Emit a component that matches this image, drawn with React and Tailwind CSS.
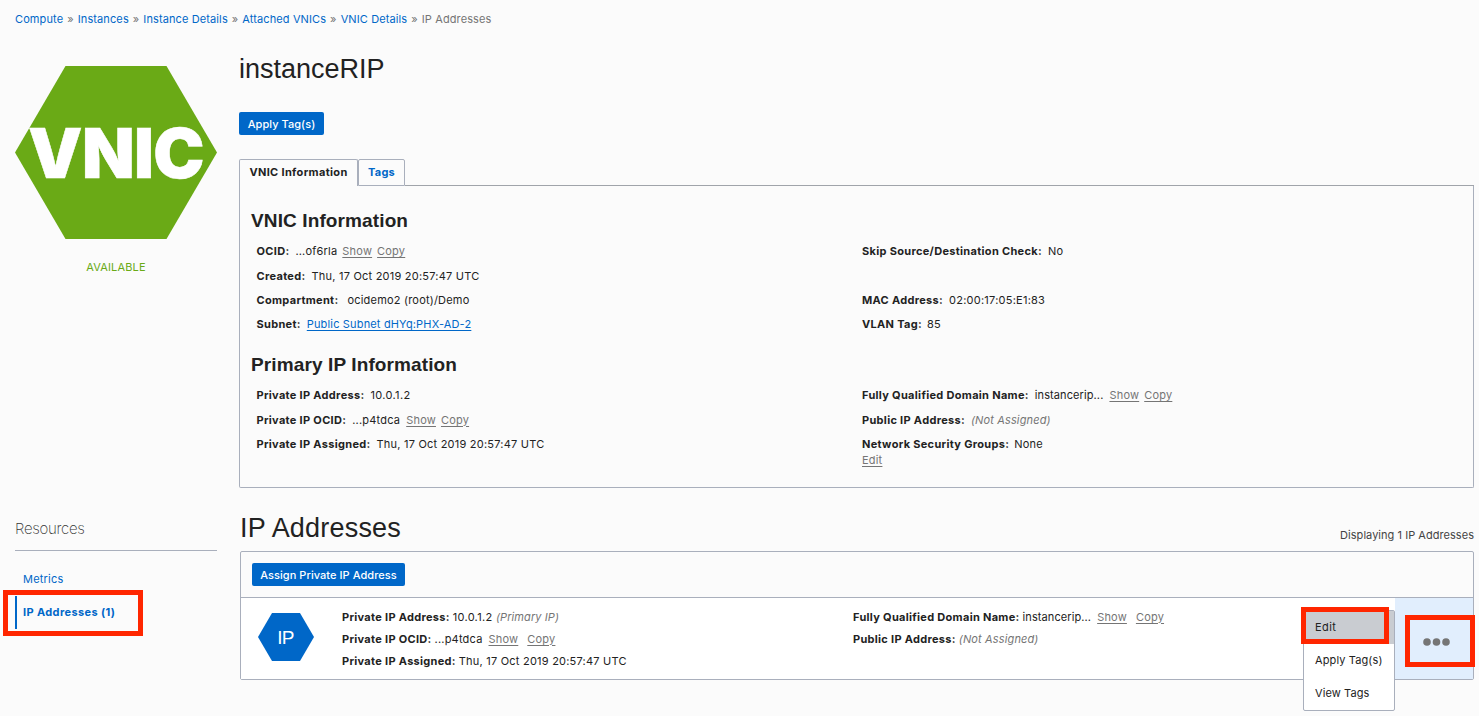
import React from "react";

const crumbs = ["Compute", "Instances", "Instance Details", "Attached VNICs", "VNIC Details"];

function Action({ children, className = "" }) {
  return (
    <a className={`text-[#757575] underline underline-offset-[2px] ${className}`} href="#">
      {children}
    </a>
  );
}

function Field({ label, children, className = "h-[24px]" }) {
  return (
    <div className={`flex items-center whitespace-nowrap ${className}`}>
      <span className="mr-[6px] font-bold tracking-[0.31px]">{label}</span>
      {children}
    </div>
  );
}

function Line({ label, children }) {
  return (
    <div className="flex h-[22px] items-center whitespace-nowrap">
      <span className="mr-[3px] font-bold tracking-[0.3px]">{label}</span>
      {children}
    </div>
  );
}

function Heading({ children }) {
  return (
    <h2 className="pt-px font-['Liberation_Sans',sans-serif] text-[19px] leading-[24px] font-bold tracking-[0.12px]">{children}</h2>
  );
}

function Sidebar() {
  return (
    <aside className="w-[202px] shrink-0">
      <svg className="mt-[28px] block" width="202" height="173" viewBox="0 0 202 173">
        <polygon points="0,86.5 50.5,0 151.5,0 202,86.5 151.5,173 50.5,173" fill="#6aaa16" />
        <text x="13" y="111.7" textLength="176" lengthAdjust="spacingAndGlyphs" fontFamily="Inter, sans-serif" fontWeight="900" fontSize="69" letterSpacing="-0.6" fill="#fff" stroke="#fff" strokeWidth="0.5">
          VNIC
        </text>
      </svg>
      <div className="mt-[18px] h-5 text-center leading-5 tracking-[0.15px] text-[#6aaa16]">AVAILABLE</div>
      <h3 className="mt-[241px] h-[33px] border-b border-[#a9afbc] font-['Inter',sans-serif] text-[15px] leading-[22px] font-extralight tracking-[-0.3px] text-[#333]">
        Resources
      </h3>
      <nav className="mt-[12px] text-[#0067c8]">
        <div className="flex h-[33px] items-center pl-2">Metrics</div>
        <div className="flex h-[33px] items-center border-l-2 border-[#0067c8] pl-[6px] font-bold tracking-[0.38px]">IP Addresses (1)</div>
      </nav>
    </aside>
  );
}

function Details() {
  return (
    <section>
      <div className="flex h-[27px]">
        <div className="z-10 flex w-[119px] items-center justify-center rounded-t-[2px] border border-b-0 border-[#a9afbc] bg-[#fbfbfb] pb-px font-bold tracking-[0.33px]">
          VNIC Information
        </div>
        <div className="flex w-[47px] items-center justify-center rounded-t-[2px] border border-[#a9afbc] pb-px font-bold tracking-[0.2px] text-[#0067c8]">Tags</div>
        <div className="flex-1 border-b border-[#a0a4aa]" />
      </div>
      <div className="h-[302px] rounded-b-[2px] border border-t-0 border-[#a9afbc] pt-[22px] pl-[11px]">
        <Heading>VNIC Information</Heading>
        <div className="mt-[6px] flex pl-[5.5px]">
          <div className="w-[605.5px]">
            <Field label="OCID:" className="h-[25px]">
              ...of6rla<Action className="ml-[5px]">Show</Action><Action className="ml-[5px]">Copy</Action>
            </Field>
            <Field label="Created:"><span className="tracking-[0.22px]">Thu, 17 Oct 2019 20:57:47 UTC</span></Field>
            <Field label="Compartment:"><span className="ml-[3px]">ocidemo2 (root)/Demo</span></Field>
            <Field label="Subnet:"><a href="#" className="tracking-[0.16px] text-[#0067c8] underline underline-offset-[2px]">Public Subnet dHYq:PHX-AD-2</a></Field>
          </div>
          <div>
            <Field label="Skip Source/Destination Check:" className="h-[25px]">No</Field>
            <Field label="MAC Address:" className="mt-[24px] h-[24px]"><span className="tracking-[0.24px]">02:00:17:05:E1:83</span></Field>
            <Field label="VLAN Tag:"><span className="-ml-px">85</span></Field>
          </div>
        </div>
        <div className="mt-[16px]">
          <Heading>Primary IP Information</Heading>
        </div>
        <div className="mt-[6px] flex pl-[5.5px]">
          <div className="w-[605.5px]">
            <Field label="Private IP Address:" className="h-[25px]"><span className="tracking-[0.35px]">10.0.1.2</span></Field>
            <Field label="Private IP OCID:">
              ...p4tdca<Action className="ml-[6px]">Show</Action><Action className="ml-[5px]">Copy</Action>
            </Field>
            <Field label="Private IP Assigned:"><span className="tracking-[0.22px]">Thu, 17 Oct 2019 20:57:47 UTC</span></Field>
          </div>
          <div>
            <Field label="Fully Qualified Domain Name:" className="h-[25px]">
              <span className="tracking-[0.1px]">instancerip...</span><Action className="ml-[6px]">Show</Action><Action className="ml-[5px]">Copy</Action>
            </Field>
            <Field label="Public IP Address:"><i className="tracking-[0.14px] text-[#757575]">(Not Assigned)</i></Field>
            <Field label="Network Security Groups:"><span className="-ml-px">None</span></Field>
            <div className="-mt-[4px] leading-4"><Action>Edit</Action></div>
          </div>
        </div>
      </div>
    </section>
  );
}

function Addresses() {
  return (
    <section className="pl-px">
      <div className="mt-[20px] flex h-[43px] justify-between">
        <h1 className="font-['Liberation_Sans',sans-serif] text-[27px] leading-[40px] font-normal">IP Addresses</h1>
        <span className="mt-[17px] leading-5 tracking-[0.04px] text-[#444]">Displaying 1 IP Addresses</span>
      </div>
      <div className="h-[129px] rounded-[2px] border border-[#a9afbc]">
        <div className="flex h-[46px] items-center border-b border-[#a9afbc] pl-[11px]">
          <button className="h-[23px] w-[153px] rounded-[2px] bg-[#0067c8] pt-[2px] font-medium tracking-[0.06px] text-white">Assign Private IP Address</button>
        </div>
        <div className="flex h-[81px] bg-white">
          <svg className="mt-[15px] ml-[17px] shrink-0" width="56" height="48" viewBox="0 0 56 48">
            <polygon points="0,24 14,0 42,0 56,24 42,48 14,48" fill="#0067c8" />
            <text x="27.5" y="31" textAnchor="middle" fontFamily="Liberation Sans, sans-serif" fontSize="19" letterSpacing="-0.7" fill="#fff">IP</text>
          </svg>
          <div className="ml-[28px] w-[511px] pt-[8px]">
            <Line label="Private IP Address:"><span className="tracking-[0.3px]">10.0.1.2</span><i className="ml-[3.5px] tracking-[0.1px] text-[#757575]">(Primary IP)</i></Line>
            <Line label="Private IP OCID:">...p4tdca<Action className="ml-[6px]">Show</Action><Action className="ml-[9px]">Copy</Action></Line>
            <Line label="Private IP Assigned:"><span className="tracking-[0.22px]">Thu, 17 Oct 2019 20:57:47 UTC</span></Line>
          </div>
          <div className="flex-1 pt-[8px]">
            <Line label="Fully Qualified Domain Name:"><span className="tracking-[0.1px]">instancerip...</span><Action className="ml-[6px]">Show</Action><Action className="ml-[9px]">Copy</Action></Line>
            <Line label="Public IP Address:"><i className="tracking-[0.14px] text-[#757575]">(Not Assigned)</i></Line>
          </div>
          <div className="flex w-[78px] items-center justify-center bg-[#e1eefd] pt-[6px] pl-[4px]">
            <svg width="28" height="8" viewBox="0 0 28 8" fill="#757575">
              <circle cx="5" cy="4" r="3.8" />
              <circle cx="14.5" cy="4" r="3.8" />
              <circle cx="24" cy="4" r="3.8" />
            </svg>
          </div>
        </div>
      </div>
    </section>
  );
}

export default function App() {
  return (
    <div className="relative h-[716px] w-[1479px] overflow-hidden bg-[#fbfbfb] pl-[15px] font-['Inter',sans-serif] text-[11px] tracking-[0.2px] text-[#222]">
      <div className="flex h-[38px] items-center gap-[4px] tracking-[0.11px] text-[#757575]">
        {crumbs.map((c) => (
          <React.Fragment key={c}>
            <a href="#" className="text-[#0067c8]">{c}</a>
            <span>»</span>
          </React.Fragment>
        ))}
        <span>IP Addresses</span>
      </div>
      <div className="flex gap-[22px]">
        <Sidebar />
        <main className="w-[1235px]">
          <h1 className="mt-[11px] h-[63px] font-['Liberation_Sans',sans-serif] text-[27px] leading-[40px] font-normal tracking-[0px]">instanceRIP</h1>
          <button className="mb-[24px] block h-[23px] w-[85px] rounded-[2px] bg-[#0067c8] pt-[2px] font-medium tracking-[0.05px] text-white">Apply Tag(s)</button>
          <Details />
          <Addresses />
        </main>
      </div>

      <div className="absolute top-[610px] left-[1303px] h-[101px] w-[92px] rounded-[2px] border border-[#a9afbc] bg-white">
        <div className="flex h-[33px] items-center bg-[#c9ccd1] pl-[11px] tracking-[0.4px]">Edit</div>
        <div className="flex h-[33px] items-center pl-[11px] tracking-[0.12px]">Apply Tag(s)</div>
        <div className="flex h-[33px] items-center pl-[11px] tracking-[0.1px]">View Tags</div>
      </div>
      <div className="absolute top-[590px] left-[3px] h-[46px] w-[140px] border-[5px] border-[#ff2600]" />
      <div className="absolute top-[607px] left-[1301px] h-[37px] w-[88px] border-[5px] border-[#ff2600]" />
      <div className="absolute top-[615px] left-[1405px] h-[52px] w-[70px] border-[5px] border-[#ff2600]" />
    </div>
  );
}
